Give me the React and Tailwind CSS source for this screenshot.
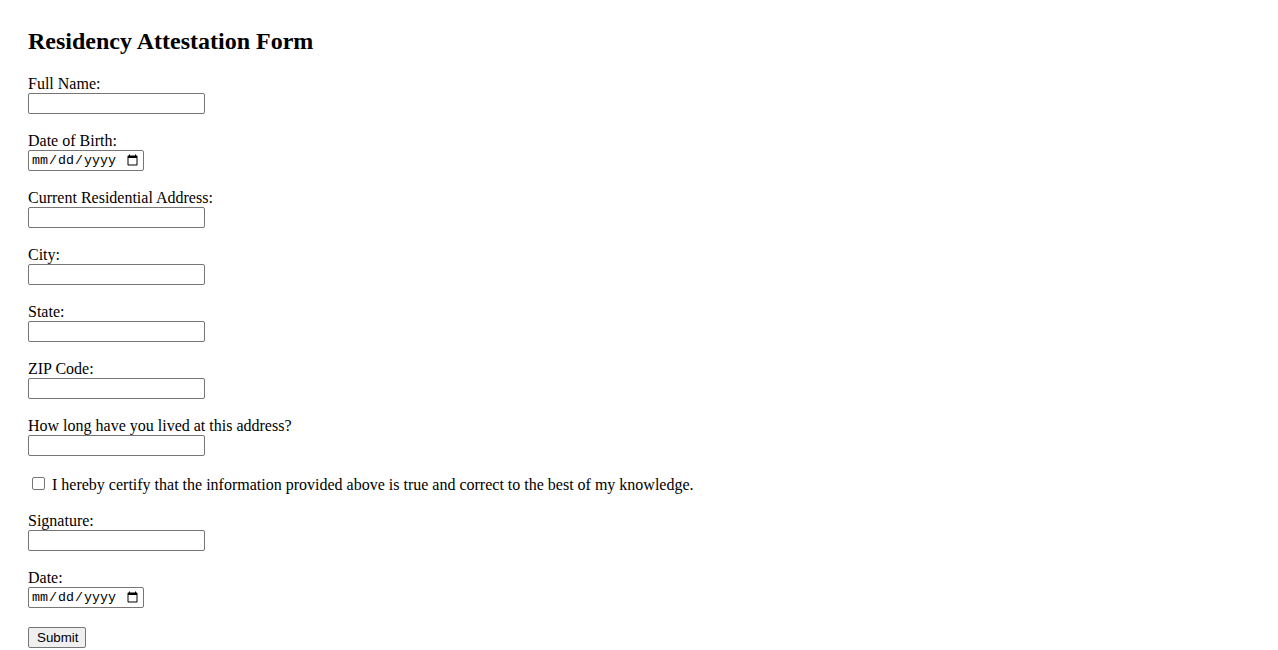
export default function App() {
  const serif = { fontFamily: '"Liberation Serif", "Times New Roman", serif' };
  const textInput =
    "block w-[177px] h-[21px] border border-[#767676] rounded-[2px] bg-white px-[2px] py-[1px] text-[13.33px] font-['Liberation_Sans',Arial,sans-serif] text-black";
  const dateInput =
    "block w-[116px] h-[21px] border border-[#767676] rounded-[2px] bg-white px-[2px] py-[1px] text-[13.33px] font-['Liberation_Mono',monospace] text-black";
  const label = "block h-[19px] leading-[19px] text-[16px] text-black";

  const Field = ({ name, type = "text" }) => (
    <div className="mb-[17px]">
      <label className={label}>{name}</label>
      <input type={type} className={type === "date" ? dateInput : textInput} />
    </div>
  );

  return (
    <div className="min-h-[650px] bg-white px-[28px] pt-[28px]" style={serif}>
      <h2 className="text-[24px] font-bold leading-[27px] mb-[19px] text-black">
        Residency Attestation Form
      </h2>
      <form onSubmit={(e) => e.preventDefault()}>
        <Field name="Full Name:" />
        <Field name="Date of Birth:" type="date" />
        <Field name="Current Residential Address:" />
        <Field name="City:" />
        <Field name="State:" />
        <Field name="ZIP Code:" />
        <Field name="How long have you lived at this address?" />
        <div className="flex items-start h-[21px] mb-[17px]">
          <input
            type="checkbox"
            className="mt-[4px] ml-[4px] mr-[7px] w-[13px] h-[13px] appearance-none border border-[#767676] rounded-[2px] bg-white"
          />
          <span className="text-[16px] leading-[19px] mt-[2px] text-black">
            I hereby certify that the information provided above is true and correct to the best of my knowledge.
          </span>
        </div>
        <Field name="Signature:" />
        <div className="mb-[19px]">
          <label className={label}>Date:</label>
          <input type="date" className={dateInput} />
        </div>
        <button
          type="submit"
          className="block h-[21px] pl-[8px] pr-[7px] border border-[#767676] rounded-[2px] bg-[#efefef] text-[13.33px] leading-[19px] text-black font-['Liberation_Sans',Arial,sans-serif]"
        >
          Submit
        </button>
      </form>
    </div>
  );
}
